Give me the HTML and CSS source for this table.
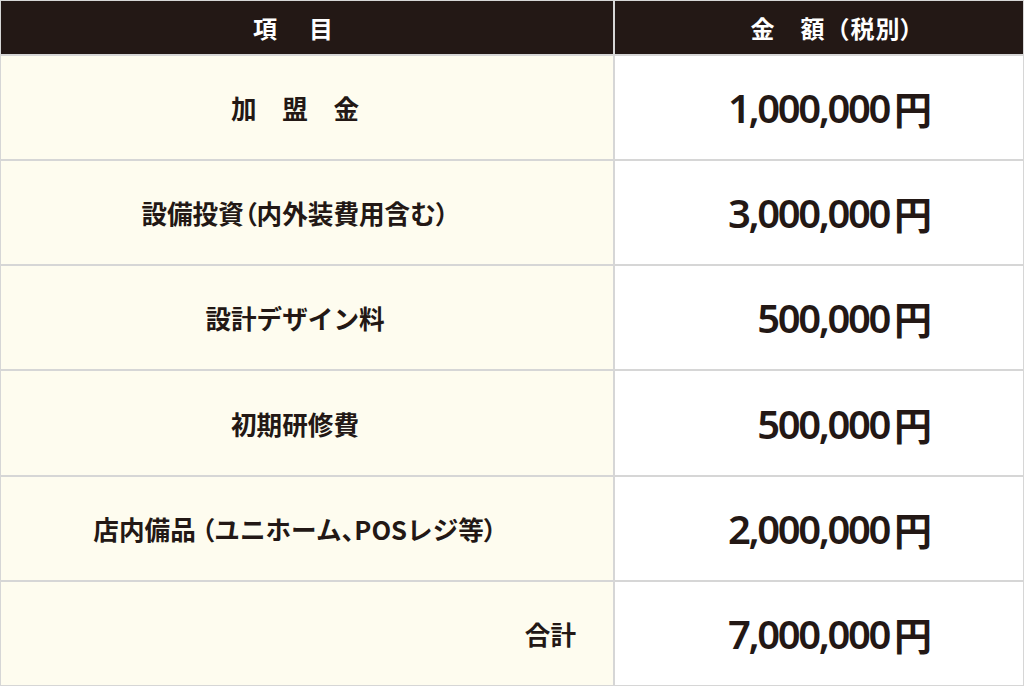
FILE: index.html
```html
<!DOCTYPE html>
<html lang="ja">
<head>
<meta charset="utf-8">
<title>費用一覧</title>
<link rel="stylesheet" href="styles.css">
</head>
<body>
<div class="table">
  <div class="row head">
    <div class="cell item">項　目</div>
    <div class="cell amount">金　額（税別<span class="prop">）</span></div>
  </div>
  <div class="row">
    <div class="cell item">加　盟　金</div>
    <div class="cell amount"><span class="num">1,000,000</span><span class="yen">円</span></div>
  </div>
  <div class="row">
    <div class="cell item">設備投資<span class="prop">（</span>内外装費用含む<span class="prop">）</span></div>
    <div class="cell amount"><span class="num">3,000,000</span><span class="yen">円</span></div>
  </div>
  <div class="row">
    <div class="cell item">設計デザイン料</div>
    <div class="cell amount"><span class="num">500,000</span><span class="yen">円</span></div>
  </div>
  <div class="row">
    <div class="cell item">初期研修費</div>
    <div class="cell amount"><span class="num">500,000</span><span class="yen">円</span></div>
  </div>
  <div class="row">
    <div class="cell item">店内備品 <span class="prop">（</span>ユニホーム<span class="prop">、</span>POSレジ等<span class="prop">）</span></div>
    <div class="cell amount"><span class="num">2,000,000</span><span class="yen">円</span></div>
  </div>
  <div class="row">
    <div class="cell item total">合計</div>
    <div class="cell amount"><span class="num">7,000,000</span><span class="yen">円</span></div>
  </div>
</div>
</body>
</html>
```

FILE: styles.css
```css
html, body {
  margin: 0;
  padding: 0;
  background: #ffffff;
}

body {
  font-family: "Noto Sans CJK JP", "Noto Sans", sans-serif;
  color: #231815;
}

.table {
  width: 1024px;
  height: 686px;
  box-sizing: border-box;
  border: 1px solid #d6d6d6;
  display: grid;
  grid-template-rows: 53px repeat(6, 1fr);
}

.row {
  display: grid;
  grid-template-columns: 614px 1fr;
}

.row + .row {
  border-top: 2px solid #d6d6d6;
}

.cell {
  display: flex;
  align-items: center;
  box-sizing: border-box;
  min-width: 0;
}

.item {
  justify-content: center;
  padding-right: 24px;
  background: #fefcef;
  border-right: 2px solid #d6d6d6;
  font-size: 25.6px;
  font-weight: 700;
  white-space: pre;
}

.item.total {
  justify-content: flex-end;
  padding-right: 37px;
}

.prop {
  font-feature-settings: "palt" 1;
}

.amount {
  justify-content: flex-end;
  padding-right: 91px;
  background: #ffffff;
  white-space: nowrap;
}

.num {
  font-family: "Noto Sans", "Open Sans", sans-serif;
  font-size: 40px;
  font-weight: 600;
  letter-spacing: -2.4px;
}

.yen {
  font-family: "Noto Sans CJK JP", sans-serif;
  font-size: 38px;
  font-weight: 700;
  margin-left: 5px;
}

.head .cell {
  background: #231815;
  color: #ffffff;
  font-size: 24px;
  font-weight: 700;
}

.head .item {
  letter-spacing: 4px;
  padding-right: 24px;
}

.head .amount {
  justify-content: center;
  padding-right: 0;
  padding-left: 26px;
  letter-spacing: 1px;
}
```
